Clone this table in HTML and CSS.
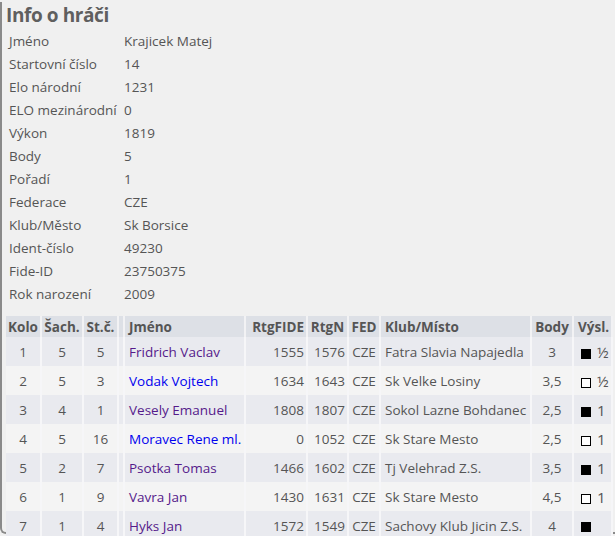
FILE: index.html
```html
<!DOCTYPE html>
<html lang="cs">
<head>
<meta charset="utf-8">
<title>Info o hráči</title>
<link rel="stylesheet" href="styles.css">
</head>
<body>
<div class="panel">
  <h2 class="title">Info o hráči</h2>
  <table class="info">
    <tr><td class="lbl">Jméno</td><td>Krajicek Matej</td></tr>
    <tr><td class="lbl">Startovní číslo</td><td>14</td></tr>
    <tr><td class="lbl">Elo národní</td><td>1231</td></tr>
    <tr><td class="lbl">ELO mezinárodní</td><td>0</td></tr>
    <tr><td class="lbl">Výkon</td><td>1819</td></tr>
    <tr><td class="lbl">Body</td><td>5</td></tr>
    <tr><td class="lbl">Pořadí</td><td>1</td></tr>
    <tr><td class="lbl">Federace</td><td>CZE</td></tr>
    <tr><td class="lbl">Klub/Město</td><td>Sk Borsice</td></tr>
    <tr><td class="lbl">Ident-číslo</td><td>49230</td></tr>
    <tr><td class="lbl">Fide-ID</td><td>23750375</td></tr>
    <tr><td class="lbl">Rok narození</td><td>2009</td></tr>
  </table>
  <table class="games">
    <colgroup>
      <col class="c-kolo"><col class="c-sach"><col class="c-stc"><col class="c-sp">
      <col class="c-name"><col class="c-fide"><col class="c-n"><col class="c-fed">
      <col class="c-klub"><col class="c-body"><col class="c-res">
    </colgroup>
    <thead>
      <tr>
        <th>Kolo</th><th>Šach.</th><th>St.č.</th><th></th>
        <th class="l">Jméno</th><th class="r">RtgFIDE</th><th>RtgN</th><th>FED</th>
        <th class="l">Klub/Místo</th><th>Body</th><th class="l">Výsl.</th>
      </tr>
    </thead>
    <tbody>
      <tr class="odd"><td>1</td><td>5</td><td>5</td><td></td><td class="l"><a class="visited" href="#">Fridrich Vaclav</a></td><td class="r">1555</td><td class="r">1576</td><td>CZE</td><td class="l">Fatra Slavia Napajedla</td><td>3</td><td class="l"><span class="sq black"></span><span class="res">½</span></td></tr>
      <tr class="even"><td>2</td><td>5</td><td>3</td><td></td><td class="l"><a class="link" href="#">Vodak Vojtech</a></td><td class="r">1634</td><td class="r">1643</td><td>CZE</td><td class="l">Sk Velke Losiny</td><td>3,5</td><td class="l"><span class="sq white"></span><span class="res">½</span></td></tr>
      <tr class="odd"><td>3</td><td>4</td><td>1</td><td></td><td class="l"><a class="visited" href="#">Vesely Emanuel</a></td><td class="r">1808</td><td class="r">1807</td><td>CZE</td><td class="l">Sokol Lazne Bohdanec</td><td>2,5</td><td class="l"><span class="sq black"></span><span class="res">1</span></td></tr>
      <tr class="even"><td>4</td><td>5</td><td>16</td><td></td><td class="l"><a class="link" href="#">Moravec Rene ml.</a></td><td class="r">0</td><td class="r">1052</td><td>CZE</td><td class="l">Sk Stare Mesto</td><td>2,5</td><td class="l"><span class="sq white"></span><span class="res">1</span></td></tr>
      <tr class="odd"><td>5</td><td>2</td><td>7</td><td></td><td class="l"><a class="visited" href="#">Psotka Tomas</a></td><td class="r">1466</td><td class="r">1602</td><td>CZE</td><td class="l">Tj Velehrad Z.S.</td><td>3,5</td><td class="l"><span class="sq black"></span><span class="res">1</span></td></tr>
      <tr class="even"><td>6</td><td>1</td><td>9</td><td></td><td class="l"><a class="visited" href="#">Vavra Jan</a></td><td class="r">1430</td><td class="r">1631</td><td>CZE</td><td class="l">Sk Stare Mesto</td><td>4,5</td><td class="l"><span class="sq white"></span><span class="res">1</span></td></tr>
      <tr class="odd"><td>7</td><td>1</td><td>4</td><td></td><td class="l"><a class="visited" href="#">Hyks Jan</a></td><td class="r">1572</td><td class="r">1549</td><td>CZE</td><td class="l">Sachovy Klub Jicin Z.S.</td><td>4</td><td class="l"><span class="sq black"></span></td></tr>
    </tbody>
  </table>
</div>
</body>
</html>
```

FILE: styles.css
```css
html, body {
  margin: 0;
  padding: 0;
  background: #f0f0f0;
}
body {
  font-family: "Open Sans", "Noto Sans", "DejaVu Sans", sans-serif;
  font-size: 13.5px;
  color: #555;
  overflow: hidden;
  height: 536px;
}
.panel {
  border-left: 2px solid #8a8a8a;
  border-bottom: 2px solid #8a8a8a;
  border-bottom-left-radius: 6px;
  padding: 1px 0 0 4px;
  height: 532px;
  margin-top: 2px;
  box-sizing: border-box;
}
.title {
  margin: 0;
  font-size: 19px;
  letter-spacing: -0.4px;
  font-weight: bold;
  line-height: 24px;
  color: #5f5f5f;
}
.info {
  border-collapse: collapse;
  margin-top: 3px;
}
.info td {
  padding: 0 0 0 3px;
  height: 23px;
  line-height: 23px;
  white-space: nowrap;
}
.info td.lbl {
  width: 112px;
}
.games {
  table-layout: fixed;
  border-collapse: separate;
  border-spacing: 0;
  margin-top: 10px;
  width: 607px;
  white-space: nowrap;
}
.games th {
  background: #dde0e6;
  font-weight: bold;
  height: 21px;
  padding: 0 2px;
  text-align: center;
  border-right: 2px solid #f2f2f4;
  color: #555;
  overflow: hidden;
}
.games td {
  height: 29px;
  padding: 0 2px;
  text-align: center;
  border-right: 2px solid #f6f6f8;
  overflow: hidden;
}
.games tr.odd td { background: #e9eaef; }
.games tr.even td { background: #f4f4f4; }
.games .l { text-align: left; padding-left: 4px; }
.games .r { text-align: right; }
.c-kolo { width: 36px; }
.c-sach { width: 42px; }
.c-stc { width: 35px; }
.c-sp { width: 6px; }
.c-name { width: 121px; }
.c-fide { width: 62px; }
.c-n { width: 41px; }
.c-fed { width: 32px; }
.c-klub { width: 151px; }
.c-body { width: 42px; }
.c-res { width: 39px; }
a { text-decoration: none; }
a.visited { color: #551a8b; }
a.link { color: #0000ee; }
.sq {
  display: inline-block;
  width: 10px;
  height: 10px;
  box-sizing: border-box;
  border: 1px solid #000;
  vertical-align: -1px;
  margin-left: 3px;
}
.sq.black { background: #000; }
.sq.white { background: #fff; }
.res { margin-left: 6px; font-size: 15px; }
```
